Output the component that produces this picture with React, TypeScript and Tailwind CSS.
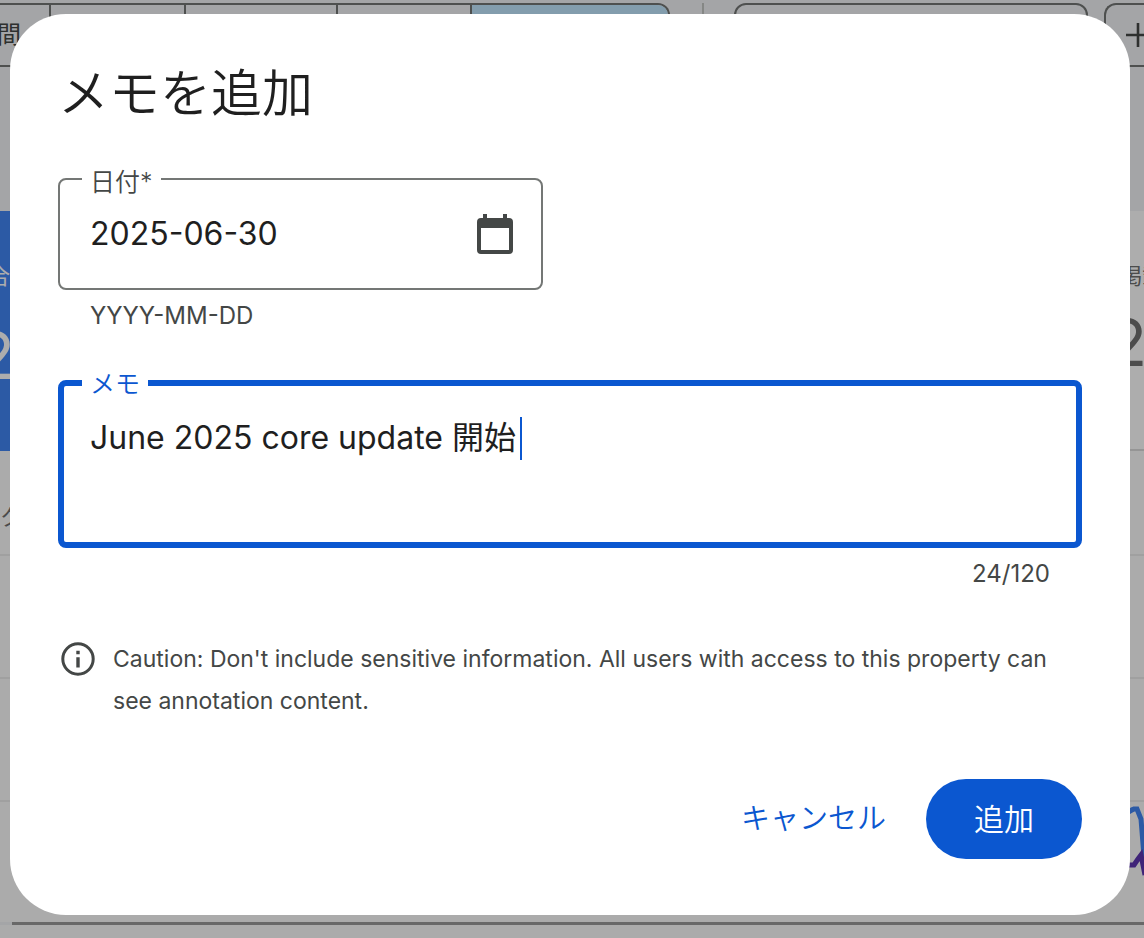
import React, { useState } from "react";

const MEMO_LIMIT = 120;

function CalendarIcon() {
  return (
    <svg viewBox="0 0 36 40" className="h-10 w-9" aria-hidden="true">
      <path
        fill="#444746"
        fillRule="evenodd"
        d="M6 0h4v4h16V0h4v4h2a4 4 0 0 1 4 4v28a4 4 0 0 1-4 4H4a4 4 0 0 1-4-4V8a4 4 0 0 1 4-4h2V0zM4 14v22h28V14H4z"
      />
    </svg>
  );
}

function InfoIcon() {
  return (
    <svg viewBox="0 0 34 34" className="mt-1 size-[34px] shrink-0" aria-hidden="true">
      <circle cx="17" cy="17" r="15.2" fill="none" stroke="#444746" strokeWidth="3" />
      <path fill="#444746" d="M15.3 8.8h3.4v3.4h-3.4zM15.3 15.2h3.4v10.2h-3.4z" />
    </svg>
  );
}

function Toolbar() {
  return (
    <div className="flex h-[67px] items-stretch bg-[#f2f3f7] pt-[3px] text-[#444746]">
      <div className="flex w-[670px] overflow-hidden rounded-r-xl border-y-2 border-r-2 border-[#747775]">
        <div className="flex w-[51px] items-center justify-end overflow-hidden border-r-2 border-[#747775] pr-7 text-2xl">
          <span className="whitespace-nowrap">時間</span>
        </div>
        <div className="w-[135px] border-r-2 border-[#747775]" />
        <div className="w-[152px] border-r-2 border-[#747775]" />
        <div className="w-[134px] border-r-2 border-[#747775]" />
        <div className="flex-1 bg-[#c2e7ff]" />
      </div>
      <div className="ml-8 w-0.5 bg-[#c4c7c5]" />
      <div className="ml-[30px] w-[354px] rounded-xl border-2 border-[#747775]" />
      <div className="ml-4 flex flex-1 items-center overflow-hidden rounded-l-xl border-2 border-r-0 border-[#747775] pl-5">
        <svg viewBox="0 0 24 24" className="size-6 shrink-0" aria-hidden="true">
          <path d="M12 0v24M0 12h24" stroke="#444746" strokeWidth="2.6" />
        </svg>
      </div>
    </div>
  );
}

function ReportPage() {
  return (
    <div className="flex h-screen min-h-[938px] flex-col overflow-hidden bg-[#f2f3f7]">
      <Toolbar />
      <div className="mt-36 flex h-60 shrink-0 bg-white">
        <div className="flex w-64 flex-col bg-[#4285f4] pt-[51px] text-white">
          <span className="-ml-3 text-[22px] leading-7">合計</span>
          <span className="-ml-6 mt-[34px] text-[64px] leading-16">2</span>
        </div>
        <div className="flex-1 border-b-2 border-[#dcdcdc]" />
        <div className="flex w-11 flex-col overflow-hidden border-b-2 border-[#dcdcdc] pt-[51px] text-[#707070]">
          <span className="ml-5 text-[22px] leading-7 whitespace-nowrap">掲載</span>
          <span className="mt-[21px] ml-2 text-[64px] leading-16">2</span>
        </div>
      </div>
      <div className="flex h-[471px] shrink-0 flex-col bg-[#fdfdfd]">
        <div className="h-[105px] border-b-2 border-[#ececec] pt-[50px] text-[22px] text-[#707070]">
          <span>ク</span>
        </div>
        <div className="h-[123px] border-b-2 border-[#ececec]" />
        <div className="h-[123px] border-b-2 border-[#ececec]" />
        <div className="flex h-[119px] justify-end pt-0.5">
          <svg viewBox="0 0 30 90" className="h-[90px] w-[30px]" fill="none" aria-hidden="true">
            <path d="M10 10C14 10 16 6 20 5l3 0 4 10 4 50" stroke="#4285f4" strokeWidth="5" />
            <path d="M8 61h12l4-6 3-4 4 20" stroke="#5e35b1" strokeWidth="5" />
          </svg>
        </div>
      </div>
      <div className="ml-3 h-[3px] shrink-0 bg-[#9a9a9a]" />
      <div className="flex-1 bg-[#fdfdfd]" />
    </div>
  );
}

export default function App() {
  const [date, setDate] = useState("2025-06-30");
  const [memo, setMemo] = useState("June 2025 core update 開始");

  return (
    <div className="relative overflow-hidden font-[Inter,'Noto_Sans_CJK_JP',sans-serif]">
      <ReportPage />
      <div className="absolute inset-0 bg-black/32 pt-[14px] pr-[14px] pl-[10px]">
        <form
          role="dialog"
          aria-labelledby="dialog-title"
          className="rounded-[56px] bg-white px-12 pt-12 pb-14 text-[#444746]"
          onSubmit={(e) => e.preventDefault()}
        >
          <h2 id="dialog-title" className="text-[51px] leading-16 font-[350] text-[#1f1f1f]">
            メモを追加
          </h2>

          <div className="relative mt-[52px] flex h-28 w-[485px] max-w-full items-center rounded-lg border-2 border-[#747775] pr-7 pl-[30px]">
            <label
              htmlFor="date"
              className="absolute -top-3.5 left-[22px] bg-white px-2 text-[25px] leading-8 font-[350]"
            >
              日付*
            </label>
            <input
              id="date"
              value={date}
              onChange={(e) => setDate(e.target.value)}
              className="min-w-0 flex-1 bg-transparent text-[32px] leading-10 text-[#1f1f1f] outline-none"
            />
            <button type="button" aria-label="カレンダーを開く">
              <CalendarIcon />
            </button>
          </div>
          <p className="mt-2 pl-8 text-2xl leading-9">YYYY-MM-DD</p>

          <div className="relative mt-[46px] h-[168px] rounded-lg border-6 border-[#0b57d0] px-[26px] pt-[30px]">
            <label
              htmlFor="memo"
              className="absolute -top-[18px] left-[18px] bg-white px-2 text-[25px] leading-8 font-[350] text-[#0b57d0]"
            >
              メモ
            </label>
            <textarea
              id="memo"
              value={memo}
              maxLength={MEMO_LIMIT}
              onChange={(e) => setMemo(e.target.value)}
              className="block h-24 w-full resize-none bg-transparent text-[32px] leading-11 text-[#1f1f1f] caret-transparent outline-none"
            />
            <span className="absolute top-[31px] left-[456px] h-[43px] w-0.5 bg-[#0b57d0]" />
          </div>
          <p className="mt-2 pr-8 text-right text-2xl leading-9">
            {memo.length}/{MEMO_LIMIT}
          </p>

          <div className="mt-[46px] flex gap-[18px] pl-[3px]">
            <InfoIcon />
            <p className="text-[23px] leading-[42px]">
              Caution: Don't include sensitive information. All users with access to this property can
              see annotation content.
            </p>
          </div>

          <div className="mt-[57px] flex items-center justify-end gap-10 font-[350]">
            <button type="button" className="text-[29px] leading-10 text-[#0b57d0]">
              キャンセル
            </button>
            <button
              type="submit"
              className="h-20 rounded-full bg-[#0b57d0] px-12 text-[30px] leading-10 text-white"
            >
              追加
            </button>
          </div>
        </form>
      </div>
    </div>
  );
}
